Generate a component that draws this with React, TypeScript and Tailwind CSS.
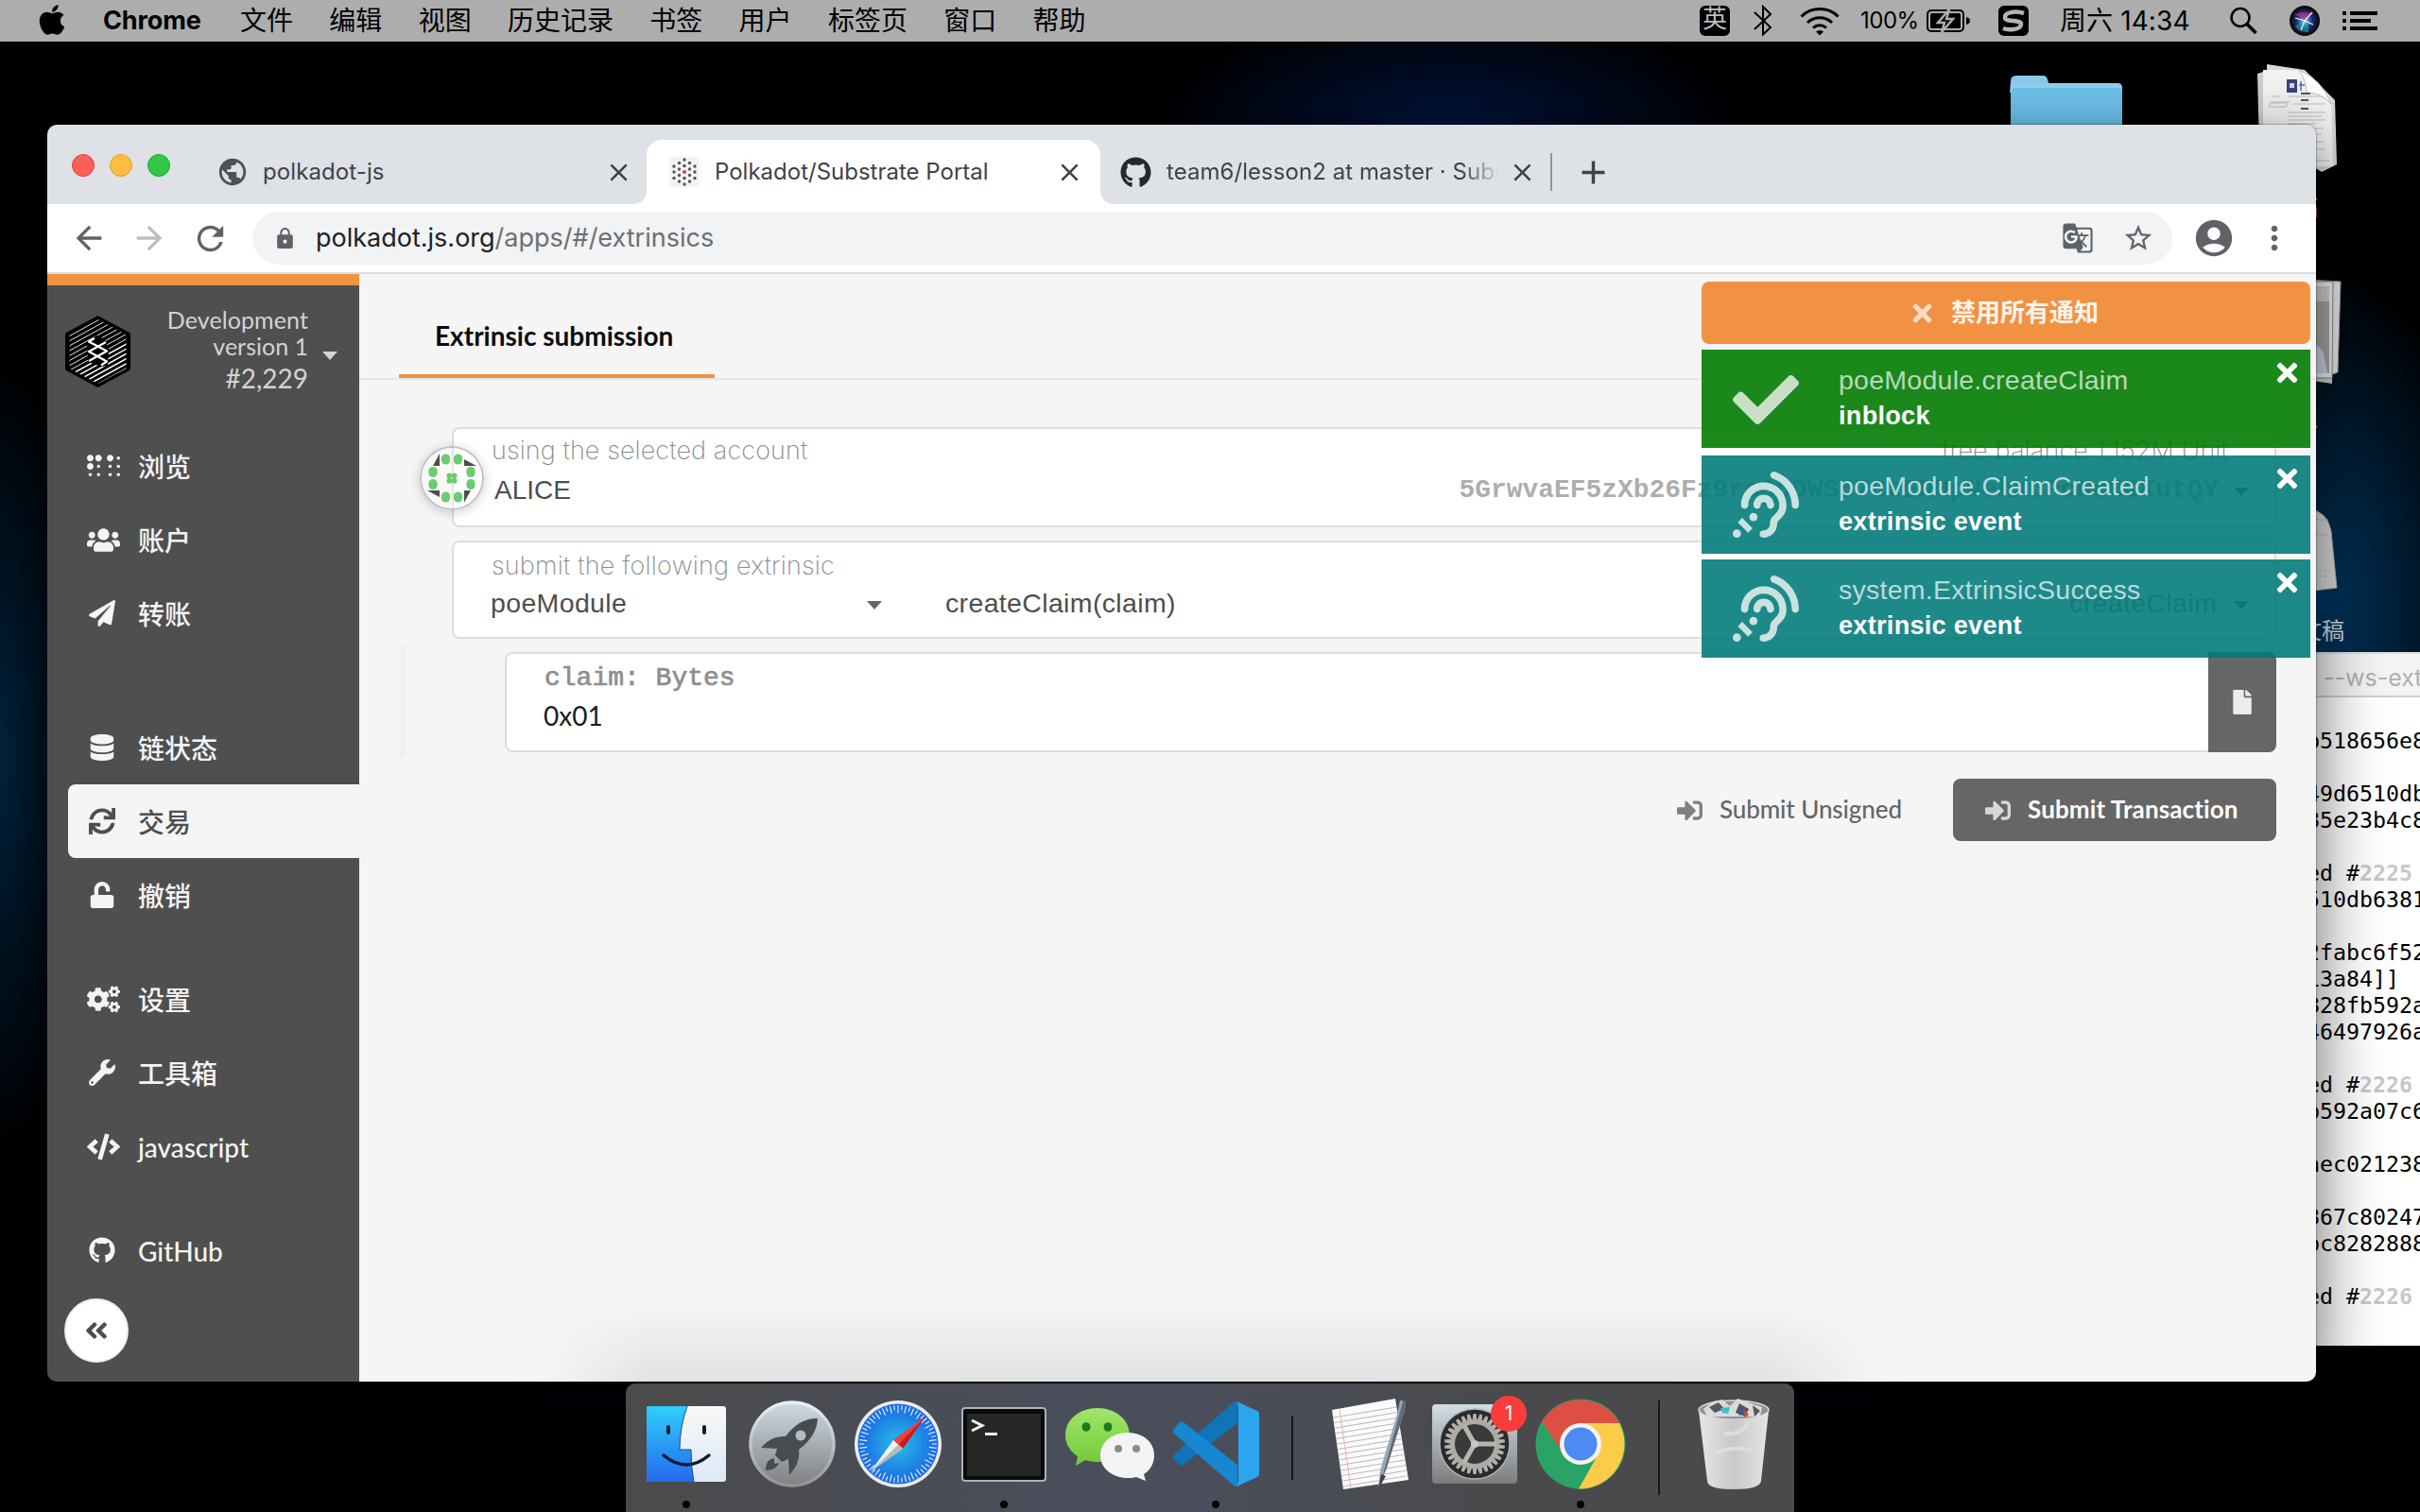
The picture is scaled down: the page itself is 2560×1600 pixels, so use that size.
import React from "react";
import {
  FaApple,
  FaBraille,
  FaUsers,
  FaPaperPlane,
  FaDatabase,
  FaSync,
  FaUnlock,
  FaCogs,
  FaWrench,
  FaCode,
  FaGithub,
  FaAngleDoubleLeft,
  FaTimes,
  FaCheck,
  FaAssistiveListeningSystems,
  FaFile,
  FaSignInAlt,
} from "react-icons/fa";
import {
  MdArrowBack,
  MdArrowForward,
  MdRefresh,
  MdLock,
  MdClose,
  MdAdd,
  MdPublic,
  MdMoreVert,
  MdGTranslate,
  MdStarBorder,
  MdAccountCircle,
} from "react-icons/md";

const SF = "font-['Inter','Noto_Sans_CJK_SC',sans-serif]";
const LATO = "font-['Lato','Noto_Sans_CJK_SC',sans-serif]";
const HELV = "font-['Liberation_Sans',sans-serif]";
const MONO = "font-['Liberation_Mono',monospace]";

/* ---------- menu bar ---------- */

const menus = ["文件", "编辑", "视图", "历史记录", "书签", "用户", "标签页", "窗口", "帮助"];

function MenuBar() {
  return (
    <div className={`flex h-11 w-full items-center bg-[#adadad] text-[28px] text-black ${SF}`}>
      <FaApple className="ml-[37px] size-[36px] shrink-0 -translate-y-px" />
      <span className="ml-9 w-[108px] whitespace-nowrap text-[27px] font-bold leading-[44px] tracking-[-0.1px]">Chrome</span>
      <div className="ml-[37px] flex gap-[38.300px] whitespace-nowrap pt-px leading-[45px]">
        {menus.map((m) => (
          <span key={m}>{m}</span>
        ))}
      </div>
      <div className="ml-auto flex items-center whitespace-nowrap leading-[44px]">
        <div className="flex size-8 items-center justify-center rounded-[6px] bg-black text-[26px] leading-none text-[#bdbdbd]">
          <span className="-mt-1 leading-8">英</span>
        </div>
        <svg className="ml-[25px] h-[34px] w-[20px]" viewBox="0 0 20 34" fill="none" stroke="#000" strokeWidth="2">
          <path d="M1 8 L18 24 L10 31.5 V2 L18 10 L1 26" />
        </svg>
        <svg className="ml-[29px] h-[32px] w-[42px]" viewBox="0 0 42 32" fill="none" stroke="#000" strokeWidth="3">
          <path d="M1.5 11.500 A28 28 0 0 1 40.500 11.500" />
          <path d="M8 18 A19 19 0 0 1 34 18" />
          <path d="M14 23.500 A10.500 10.500 0 0 1 28 23.500" />
          <path d="M17 27.500 Q21 24.500 25 27.500 L21 31.500 Z" fill="#000" stroke="none" />
        </svg>
        <span className="ml-[22px] w-[62px] text-[24px] tracking-[-0.5px]">100%</span>
        <svg className="ml-[8px] h-[26px] w-[46px]" viewBox="0 0 46 26">
          <rect x="1" y="2" width="38" height="22" rx="4" fill="none" stroke="#000" strokeWidth="2" />
          <rect x="4" y="5" width="32" height="16" rx="1.500" />
          <path d="M42 9 q4 1 4 4 t-4 4z" />
          <path d="M24 1 L12 15 H19 L16 25 L28 11 H21 Z" stroke="#adadad" strokeWidth="2.500" />
        </svg>
        <svg className="ml-[30px] size-8" viewBox="0 0 32 32">
          <rect width="32" height="32" rx="6" />
          <path d="M27 8 C18 5 6 7 7 13 C8 18 25 14 24 20 C23 26 10 26 5 24" fill="none" stroke="#b5b5b5" strokeWidth="4.500" />
        </svg>
        <span className="ml-[33px] w-[138px] text-[28px] tracking-[0.1px]">周六 14:34</span>
        <svg className="ml-[41px] size-[30px]" viewBox="0 0 30 30" fill="none" stroke="#000" strokeWidth="2.500">
          <circle cx="12" cy="11.500" r="9.500" />
          <path d="M19 18.500 L28.500 28" strokeWidth="3.500" />
        </svg>
        <svg className="ml-[34px] size-8" viewBox="0 0 32 32">
          <defs>
            <radialGradient id="siri">
              <stop offset="0" stopColor="#b8e4f8" />
              <stop offset=".3" stopColor="#3a80c0" />
              <stop offset=".6" stopColor="#232a78" />
              <stop offset="1" stopColor="#101018" />
            </radialGradient>
          </defs>
          <circle cx="16" cy="16" r="16" fill="#0a0a12" />
          <circle cx="16" cy="16" r="14" fill="url(#siri)" />
          <path d="M5 10 Q14 4 25 9 Q18 12 16 16 Q10 10 5 10" fill="#b0308a" opacity=".7" />
          <path d="M6 22 Q12 16 16 16 Q22 20 20 28 Q10 28 6 22" fill="#28c0b0" opacity=".5" />
          <path d="M16 16 L24 7 M16 16 L6 13 M16 16 L25 20 M16 16 L12 26" stroke="#e8f4ff" strokeWidth="1.200" />
        </svg>
        <svg className="ml-[24px] mr-[45px] h-[20px] w-[37px]" viewBox="0 0 37 20">
          <path d="M0 0h4v4H0zM8 0h29v4H8zM0 8h4v4H0zM8 8h22v4H8zM0 16h4v4H0zM8 16h29v4H8z" />
        </svg>
      </div>
    </div>
  );
}

/* ---------- desktop icons ---------- */

function DesktopIcons() {
  return (
    <>
      <svg className="absolute left-[2126px] top-[78px] h-[70px] w-[120px]" viewBox="0 0 120 70">
        <path d="M1 8 q0-6 6-6 h28 q4 0 5 4 l4 14 H0z" fill="#8ccbea" />
        <path d="M1 70 V10 h40 q3 0 4 0 h69 q5 0 5 5 V70z" fill="#93d0ee" />
        <path d="M1 70 V20 q0-5 5-5 h108 q5 0 5 5 V70z" fill="#6dc3ec" />
      </svg>
      <svg className="absolute left-[2386px] top-[66px] h-[120px] w-[88px]" viewBox="0 0 88 120">
        <path d="M12 2 L52 8 L84 40 L86 108 L70 116 L12 80z" fill="#d9d9d9" />
        <path d="M2 12 L8 10 L14 90 L4 90z" fill="#cfcfcf" />
        <path d="M8 8 L46 8 Q62 12 80 40 L82 110 L8 110z" fill="#f3f3f3" />
        <path d="M46 8 Q54 20 54 32 Q70 32 80 44 Q70 18 46 8" fill="#fff" stroke="#bbb" />
        <rect x="33" y="18" width="11" height="14" fill="#3a4278" />
        <rect x="36" y="22" width="5" height="5" fill="#d0d8f0" />
        <path d="M48 20v10M46 24h6" stroke="#5868b0" strokeWidth="1.500" />
        <path d="M48 33h10M48 40h8M48 49h8" stroke="#555" strokeWidth="2" />
        <path d="M17 36h8M34 36h36M17 42h20M40 44h34M34 53h40M34 57h36M34 61h40M34 65h30M34 70h38M34 76h36M34 84h38M60 92h14" stroke="#bdbdbd" />
        <path d="M15 43h18v4h-18z" fill="none" stroke="#bbb" />
        <path d="M50 104h28" stroke="#9cd0ee" />
      </svg>
      <svg className="absolute left-[2440px] top-[294px] h-[116px] w-[38px]" viewBox="0 0 38 116">
        <path d="M0 2 L36 4 L33 100 L0 112z" fill="#e6e6e6" stroke="#999" />
        <path d="M0 108 L27 112 L28 20 L0 20z" fill="#cfcfcf" />
        <path d="M0 4 H28 L27 106 H0z" fill="#f2f2f2" stroke="#888" />
        <rect x="0" y="9" width="24" height="92" fill="#a9a9a4" />
        <rect x="0" y="9" width="24" height="16" fill="#d2d4d8" />
        <path d="M0 101 V74 Q12 66 18 80 L22 101z" fill="#d4d6ea" />
      </svg>
      <svg className="absolute left-[2440px] top-[538px] h-[90px] w-[34px]" viewBox="0 0 34 90">
        <path d="M0 0 Q22 2 26 24 L32 84 L0 88z" fill="#dcdcdc" stroke="#aaa" />
        <path d="M0 12h24M10 28h14M8 66h16M8 72h16" stroke="#b5b5b5" strokeDasharray="3 2" />
      </svg>
      <div className={`absolute left-[2432px] top-[650px] text-[24px] leading-9 text-[#d8dde3] ${SF}`}>文稿</div>
      <div className={`absolute left-[2428px] top-[202px] text-[24px] leading-9 text-[#d8dde3] ${SF}`}>稿</div>
      <div className={`absolute left-[2428px] top-[426px] text-[24px] leading-9 text-[#d8dde3] ${SF}`}>像</div>
    </>
  );
}

/* ---------- terminal window behind the browser ---------- */

type Line = { t: string; n?: string };
const log: Line[] = [
  { t: "b518656e8" }, { t: "" }, { t: "49d6510db" }, { t: "85e23b4c8" }, { t: "" },
  { t: "ed #", n: "2225" }, { t: "510db6381" }, { t: "" }, { t: "2fabc6f52" }, { t: "13a84]]" },
  { t: "828fb592a" }, { t: "46497926a" }, { t: "" }, { t: "ed #", n: "2226" }, { t: "b592a07c6" },
  { t: "" }, { t: "aec021238" }, { t: "" }, { t: "867c80247" }, { t: "bc8282888" }, { t: "" },
  { t: "ed #", n: "2226" },
];

function TerminalWindow() {
  return (
    <div className="absolute left-[2300px] top-[690px] h-[734px] w-[400px] overflow-hidden bg-white">
      <div className={`h-[48px] border-b-2 border-[#cfcfcf] border-t-2 border-t-[#e0e0e0] bg-[#f4f4f4] pl-[158px] text-[25px] leading-[51px] text-[#b0b0b0] ${SF}`}>
        --ws-external
      </div>
      <div className="mt-[32px] pl-[140px] font-['DejaVu_Sans_Mono',monospace] text-[23.26px] leading-[28px] text-black">
        {log.map((l, i) => (
          <div key={i} className="h-7 whitespace-pre">
            {l.t}
            {l.n && <b className="text-[#c8c8c8]">{l.n}</b>}
          </div>
        ))}
      </div>
    </div>
  );
}

/* ---------- browser chrome ---------- */

const dots: [number, number][] = [
  [16, 3], [10.5, 6.5], [21.5, 6.5], [5, 10], [16, 9.500], [27, 10], [10.5, 13], [21.5, 13],
  [5, 16], [27, 16], [10.5, 19.500], [21.5, 19.500], [5, 22.500], [16, 22.500], [27, 22.500],
  [10.5, 26], [21.5, 26], [16, 29],
];

function TabStrip() {
  return (
    <div className={`flex h-[84px] items-end bg-[#dee1e6] text-[24px] text-[#3f4246] ${SF}`}>
      <div className="flex h-[68px] w-[620px] items-center pl-[26px]">
        <div className="-mt-[14px] flex gap-4">
          <span className="size-6 rounded-full border border-[#e0443e] bg-[#ff5f57]" />
          <span className="size-6 rounded-full border border-[#dea123] bg-[#febc40]" />
          <span className="size-6 rounded-full border border-[#1aab29] bg-[#33c748]" />
        </div>
        <MdPublic className="ml-[49px] size-[34px] text-[#4e5257]" />
        <span className="ml-[15px] tracking-[0.1px]">polkadot-js</span>
        <MdClose className="ml-auto size-[31px] shrink-0" />
      </div>
      <div className="relative ml-[14px] flex h-[68px] w-[480px] items-center rounded-t-[16px] bg-white pl-[24px]">
        <svg className="absolute -left-4 bottom-0 size-4" viewBox="0 0 16 16"><path d="M16 0v16H0Q16 16 16 0" fill="#fff" /></svg>
        <svg className="absolute -right-4 bottom-0 size-4" viewBox="0 0 16 16"><path d="M0 0v16h16Q0 16 0 0" fill="#fff" /></svg>
        <svg className="size-8" viewBox="0 0 32 32">
          <rect width="32" height="32" fill="#f3f3f3" />
          {dots.map(([x, y], i) => (
            <circle key={i} cx={x} cy={y} r="1.700" fill="#555" />
          ))}
          <circle cx="16" cy="16" r="2" fill="#e6298a" />
        </svg>
        <span className="ml-[16px] whitespace-nowrap tracking-[0px]">Polkadot/Substrate Portal</span>
        <MdClose className="ml-auto mr-[17px] size-[31px] shrink-0" />
      </div>
      <div className="flex h-[68px] items-center pl-[21px]">
        <FaGithub className="size-[33px] shrink-0 text-[#24292e]" />
        <span className="ml-4 w-[350px] overflow-hidden whitespace-nowrap tracking-[0.05px] [mask-image:linear-gradient(to_right,black_89%,transparent_101%)]">
          team6/lesson2 at master · Substrate
        </span>
        <MdClose className="ml-[11px] size-[31px] shrink-0" />
        <span className="ml-[14px] h-10 w-[2px] bg-[#8f9398]" />
        <MdAdd className="ml-[23px] size-[41px] shrink-0" />
      </div>
    </div>
  );
}

function Toolbar() {
  return (
    <div className={`flex h-[74px] items-center border-b-2 border-[#d9dbdf] bg-white text-[#5f6368] ${SF}`}>
      <MdArrowBack className="ml-[24px] size-[40px] shrink-0" />
      <MdArrowForward className="ml-[24px] size-[40px] shrink-0 text-[#bcbec1]" />
      <MdRefresh className="ml-[24px] size-[41px] shrink-0" />
      <div className="ml-[24px] flex h-14 w-[2031px] items-center rounded-full bg-[#f1f3f4] pl-[22px]">
        <MdLock className="size-[25px]" />
        <span className="ml-[20px] pt-px text-[27px] tracking-[0px] text-[#6b6f74]">
          <span className="text-[#202124]">polkadot.js.org</span>/apps/#/extrinsics
        </span>
        <MdGTranslate className="ml-auto size-[34px]" />
        <MdStarBorder className="ml-[30px] mr-[19px] size-[34px]" />
      </div>
      <MdAccountCircle className="ml-[21px] size-[46px] shrink-0" />
      <MdMoreVert className="ml-[21px] size-[40px] shrink-0" />
    </div>
  );
}

/* ---------- sidebar ---------- */

const groups = [
  {
    gap: "mt-0",
    items: [
      { icon: FaBraille, label: "浏览", wide: true },
      { icon: FaUsers, label: "账户", wide: true },
      { icon: FaPaperPlane, label: "转账", wide: false },
    ],
  },
  {
    gap: "mt-16",
    items: [
      { icon: FaDatabase, label: "链状态", wide: false },
      { icon: FaSync, label: "交易", wide: false, active: true },
      { icon: FaUnlock, label: "撤销", wide: false },
    ],
  },
  {
    gap: "mt-8",
    items: [
      { icon: FaCogs, label: "设置", wide: true },
      { icon: FaWrench, label: "工具箱", wide: false },
      { icon: FaCode, label: "javascript", wide: true },
    ],
  },
  { gap: "mt-8", items: [{ icon: FaGithub, label: "GitHub", wide: false }] },
] as { gap: string; items: { icon: React.ComponentType<{ className?: string }>; label: string; wide: boolean; active?: boolean }[] }[];

const stripes = Array.from({ length: 15 }, (_, i) => i);

function Logo() {
  return (
    <svg className="h-[76px] w-[69px]" viewBox="0 0 69 76">
      <defs>
        <clipPath id="hex"><path d="M34.500 4 L64.500 20 V56 L34.500 72 L4.500 56 V20z" /></clipPath>
      </defs>
      <path d="M34.500 0 L68 18 Q69 19 69 20 V56 Q69 57 68 58 L34.500 76 L1 58 Q0 57 0 56 V20 Q0 19 1 18z" fill="#000" />
      <g clipPath="url(#hex)" stroke="#fff">
        {stripes.map((i) => (
          <path key={i} d={`M0 ${24 + i * 5.2} L69 ${-14 + i * 5.2}`} strokeWidth={i > 7 ? 1.5 : 0.9} />
        ))}
      </g>
      <path d="M33 21 L42 25 L46 36 L45 53 L38 54 L24 49 L23 28z" fill="#000" />
      <g fill="none" stroke="#fff" strokeWidth="2.200" strokeLinejoin="round">
        <path d="M31 24 L25 27.500 L44 37.500 L25 48" />
        <path d="M43 28 L25 38 L44 48.500 L38 52.500" />
      </g>
    </svg>
  );
}

function Sidebar() {
  return (
    <div className={`flex h-full w-[330px] shrink-0 flex-col border-t-[12px] border-[#f19242] bg-[#4f4f4f] text-[28px] text-[#f4f4f4] ${LATO}`}>
      <div className="flex h-[152px] pl-[19px] pt-[32px] text-[#d3d3d3]">
        <Logo />
        <div className="-mt-[10px] flex w-[188px] flex-col text-right">
          <span className="text-[25px] leading-[28px] tracking-[0.1px]">Development</span>
          <span className="text-[25px] leading-[28px]">version 1</span>
          <span className="mt-[2px] text-[28px] leading-[36px]">#2,229</span>
        </div>
        <svg className="ml-[15px] mt-[38px] h-[9px] w-4" viewBox="0 0 16 9"><path d="M0 0h16L8 9z" fill="#d3d3d3" /></svg>
      </div>
      {groups.map((g, gi) => (
        <div key={gi} className={g.gap}>
          {g.items.map((it) => (
            <div
              key={it.label}
              className={
                it.active
                  ? "ml-[22px] flex h-[78px] items-center rounded-l-[8px] bg-[#f5f5f5] pl-[18px] text-[#4e4e4e]"
                  : "ml-[22px] flex h-[78px] items-center pl-[18px]"
              }
            >
              <span className="flex w-[38px] justify-center">
                <it.icon className={it.wide ? "size-[35px] shrink-0" : "size-[28px] shrink-0 -translate-x-px"} />
              </span>
              <span className="ml-[18px] pt-px font-medium leading-[40px]">{it.label}</span>
            </div>
          ))}
        </div>
      ))}
      <div className="ml-[18px] mt-[12px] flex size-[68px] items-center justify-center rounded-full border-2 border-[#eee] bg-white text-[#4e4e4e]">
        <FaAngleDoubleLeft className="size-[28px]" />
      </div>
    </div>
  );
}

/* ---------- page content ---------- */

function Caret({ className }: { className: string }) {
  return (
    <svg className={className} viewBox="0 0 16 9">
      <path d="M0 0h16L8 9z" fill="#666" />
    </svg>
  );
}

const ring: [number, number][] = [
  [27.5, 14], [40.5, 14], [14, 27.500], [54, 27.500], [14, 40.500], [54, 40.500], [27.5, 54], [40.5, 54],
];

function Identicon() {
  return (
    <svg className="absolute -left-[36px] top-[18px] size-[68px] rounded-full shadow-[0_2px_12px_rgba(0,0,0,.2)]" viewBox="0 0 68 68">
      <circle cx="34" cy="34" r="33" fill="rgba(255,255,255,.3)" stroke="#c0c0c0" strokeWidth="2" />
      {ring.map(([x, y], i) => (
        <rect key={i} x={x - 4.6} y={y - 5.5} width="9.200" height="11" rx="4.500" fill="#6acd6f" />
      ))}
      <g fill="#6acd6f">
        <circle cx="31.300" cy="31.300" r="2.900" />
        <circle cx="36.700" cy="31.300" r="2.900" />
        <circle cx="31.300" cy="36.700" r="2.900" />
        <circle cx="36.700" cy="36.700" r="2.900" />
      </g>
      <path d="M21 8V21H14zM47 14L60 21H47zM8 47H21V54zM47 47H54L47 60z" fill="#4e4e4e" />
    </svg>
  );
}

function Content() {
  return (
    <div className="relative flex-1 bg-[#f5f5f5]">
      <div className={`h-[112px] border-b-2 border-[#e6e6e6] pl-[42px] ${LATO}`}>
        <div className="h-[110px] w-[334px] whitespace-nowrap border-b-4 border-[#f19242] pl-[38px] pt-[44px] text-[28px] font-bold leading-[42px] text-[#0c0c0c]">
          Extrinsic submission
        </div>
      </div>

      <div className="relative ml-[98px] mt-[50px] flex h-[106px] w-[1930px] rounded-[8px] border-2 border-[#ddd] bg-white pl-[40px]">
        <Identicon />
        <div className="flex-1 pt-[7px]">
          <div className={`text-[27px] font-extralight leading-8 tracking-[0.1px] text-[#8a8a8a] ${SF}`}>using the selected account</div>
          <div className={`mt-[10px] pl-[3px] text-[28px] leading-8 text-[#4e4e4e] ${HELV}`}>ALICE</div>
        </div>
        <div className="pt-[7px] text-right">
          <div className={`-mr-[10px] text-[27px] font-extralight leading-8 tracking-[0.15px] text-[#8a8a8a] ${SF}`}>free balance 1.152M Unit</div>
          <div className={`mt-[10px] text-[27.900px] font-bold leading-8 text-[#adadad] ${MONO}`}>
            5GrwvaEF5zXb26Fz9rcQpDWS57CtERHpNehXCPcNoHGKutQY
          </div>
        </div>
        <Caret className="ml-[16px] mr-[27px] mt-[62px] h-[9px] w-4" />
      </div>

      <div className="ml-[98px] mt-[14px] flex h-[104px] w-[1930px] rounded-[8px] border-2 border-[#ddd] bg-white pl-[40px]">
        <div className="w-[397px] shrink-0 pt-[9px]">
          <div className={`whitespace-nowrap text-[27px] font-extralight leading-8 tracking-[0.2px] text-[#8a8a8a] ${SF}`}>submit the following extrinsic</div>
          <div className={`-ml-px mt-[7px] text-[28.500px] leading-8 tracking-[0.35px] text-[#4e4e4e] ${HELV}`}>poeModule</div>
        </div>
        <Caret className="mt-[62px] h-[9px] w-4" />
        <div className={`ml-[67px] flex-1 pt-[48px] text-[28.500px] leading-8 tracking-[0.35px] text-[#4e4e4e] ${HELV}`}>createClaim(claim)</div>
        <div className={`pt-[48px] text-[28.500px] leading-8 tracking-[0.35px] text-[#8a8a8a] ${HELV}`}>createClaim</div>
        <Caret className="ml-[18px] mr-[27px] mt-[62px] h-[9px] w-4" />
      </div>

      <div className="ml-[42px] mt-[6px] flex h-[120px] border-l-8 border-[#f0f0f0] pl-[104px] pt-[8px]">
        <div className="flex h-[106px] w-[1874px]">
          <div className="flex-1 rounded-l-[8px] border-2 border-r-0 border-[#ddd] bg-white pl-[40px] pt-[10px]">
            <div className={`text-[28px] leading-8 text-[#8e8e8e] [-webkit-text-stroke:0.7px_#8e8e8e] ${MONO}`}>claim: Bytes</div>
            <div className={`-ml-px mt-[7px] text-[28px] leading-8 text-[#1c1c1c] ${LATO}`}>0x01</div>
          </div>
          <div className="flex w-[72px] items-center justify-center rounded-r-[8px] bg-[#666]">
            <FaFile className="size-[26px] text-[#ececec]" />
          </div>
        </div>
      </div>

      <div className={`mr-[42px] mt-[22px] flex h-[66px] justify-end text-[26px] ${LATO}`}>
        <div className="mr-[54px] flex items-center text-[#666]">
          <FaSignInAlt className="size-[27px] text-[#808080]" />
          <span className="-mt-[2px] ml-[18px] font-medium tracking-[-0.08px]">Submit Unsigned</span>
        </div>
        <div className="flex w-[342px] items-center rounded-[8px] bg-[#666] pl-[34px] text-white">
          <FaSignInAlt className="size-[27px] text-[#d8d8d8]" />
          <span className="-mt-[2px] ml-[18px] whitespace-nowrap font-bold tracking-[0.12px]">Submit Transaction</span>
        </div>
      </div>

      <Notifications />
      <div className="absolute bottom-0 left-[190px] h-[84px] w-[1420px] bg-[linear-gradient(to_bottom,transparent,rgba(0,0,0,.075))] [mask-image:linear-gradient(to_right,transparent,black_120px,black_1300px,transparent)]" />
    </div>
  );
}

const notices = [
  { title: "poeModule.createClaim", sub: "inblock", cls: "relative flex h-[104px] bg-[rgba(0,122,0,.89)]", ok: true },
  { title: "poeModule.ClaimCreated", sub: "extrinsic event", cls: "relative mt-2 flex h-[104px] bg-[rgba(0,122,122,.885)]", ok: false },
  { title: "system.ExtrinsicSuccess", sub: "extrinsic event", cls: "relative mt-[6px] flex h-[104px] bg-[rgba(0,122,122,.885)]", ok: false },
];

function Notifications() {
  return (
    <div className="absolute right-[6px] top-[8px] w-[644px]">
      <div className={`mb-[6px] flex h-[66px] items-center justify-center rounded-[8px] bg-[#f19242] pr-[5px] text-[26px] font-bold text-[#fdf3ea] ${LATO}`}>
        <FaTimes className="mr-[16px] size-[29px] text-[#f8dcc4]" />
        <span className="-mt-px">禁用所有通知</span>
      </div>
      {notices.map((n) => (
        <div key={n.title} className={n.cls}>
          <div className="ml-[33px] flex w-[70px] items-center justify-center text-[#c9e2df]">
            {n.ok ? <FaCheck className="mt-[2px] size-[70px] text-[#c8e0c8]" /> : <FaAssistiveListeningSystems className="size-[70px]" />}
          </div>
          <div className={`ml-[42px] pt-[16px] leading-8 ${HELV}`}>
            <div className="text-[28.500px] tracking-[0.26px] text-white/70">{n.title}</div>
            <div className="mt-[6px] text-[27px] font-bold tracking-[0.32px] text-white">{n.sub}</div>
          </div>
          <FaTimes className="absolute right-[9px] top-[9px] size-[31px] text-white" />
        </div>
      ))}
    </div>
  );
}

/* ---------- dock ---------- */

const ticks = Array.from({ length: 60 }, (_, i) => i);
const teeth = Array.from({ length: 30 }, (_, i) => i);

function Finder() {
  return (
    <svg className="h-[80px] w-[84px]" viewBox="0 0 84 80">
      <defs>
        <linearGradient id="fl" x2="0" y2="1"><stop stopColor="#2dd0fd" /><stop offset="1" stopColor="#2469ee" /></linearGradient>
        <linearGradient id="fr" x2="0" y2="1"><stop stopColor="#f8f8f8" /><stop offset="1" stopColor="#dce9f6" /></linearGradient>
      </defs>
      <rect width="84" height="80" rx="3" fill="url(#fr)" />
      <path d="M3 0H43Q35 22 35 46H47Q47 64 50 80H3Q0 80 0 77V3Q0 0 3 0" fill="url(#fl)" />
      <path d="M43 0Q35 22 35 46H47Q47 64 50 80" fill="none" stroke="#1c4e8c" strokeWidth="1" />
      <path d="M23 22v6M61 22v6" stroke="#0c1c2c" strokeWidth="4" strokeLinecap="round" />
      <path d="M18 52Q42 72 66 52" fill="none" stroke="#0c1c2c" strokeWidth="3.500" strokeLinecap="round" />
    </svg>
  );
}

function Launchpad() {
  return (
    <svg className="size-[92px]" viewBox="0 0 92 92">
      <defs>
        <linearGradient id="lp" x2="0" y2="1"><stop stopColor="#cddbe2" /><stop offset="1" stopColor="#7f8081" /></linearGradient>
        <linearGradient id="lpr" x2="0" y2="1"><stop stopColor="#e4f1f7" /><stop offset="1" stopColor="#929394" /></linearGradient>
      </defs>
      <circle cx="46" cy="46" r="44" fill="url(#lp)" stroke="url(#lpr)" strokeWidth="3.500" />
      <path d="M73 19 Q54 18 39 38 Q24 37 13 50 L30 51 L28 58 L35 65 L42 62 L43 79 Q55 66 53 52 Q72 38 73 19" fill="#484c50" />
      <path d="M27 61 Q18 62 18 74 Q30 73 32 66 L27 67z" fill="#484c50" />
      <circle cx="55" cy="37" r="5.500" fill="#b3bcc1" />
    </svg>
  );
}

function Safari() {
  return (
    <svg className="size-[92px]" viewBox="0 0 92 92">
      <defs>
        <radialGradient id="sf"><stop stopColor="#27bfe0" /><stop offset="1" stopColor="#1a68e8" /></radialGradient>
      </defs>
      <circle cx="46" cy="46" r="46" fill="#ececec" />
      <circle cx="46" cy="46" r="42.500" fill="url(#sf)" />
      {ticks.map((i) => (
        <path key={i} d={i % 2 ? "M46 5v5" : "M46 5v8"} stroke="#d8ecfa" strokeWidth="1.200" transform={`rotate(${i * 6} 46 46)`} />
      ))}
      <path d="M75 17L41 42L51 51z" fill="#f0403c" />
      <path d="M75 17L46.500 46.500L51 51z" fill="#c81c20" />
      <path d="M17 75L41 42L51 51z" fill="#f2f2f2" />
      <path d="M17 75L46.500 46.500L51 51z" fill="#b8b8b8" />
    </svg>
  );
}

function TerminalIcon() {
  return (
    <svg className="h-[79px] w-[90px]" viewBox="0 0 90 79">
      <rect x="1" y="1" width="88" height="77" rx="3" fill="#0a0a0a" stroke="#a9b4b8" strokeWidth="2" />
      <rect x="6" y="7" width="78" height="66" fill="#262626" />
      <path d="M11 14L22 19.500L11 25M25 28.500H38" fill="none" stroke="#f2f2f2" strokeWidth="3" />
    </svg>
  );
}

function WeChat() {
  return (
    <svg className="h-[78px] w-[95px]" viewBox="0 0 95 78">
      <defs>
        <linearGradient id="wc" x2="0" y2="1"><stop stopColor="#a0e66c" /><stop offset="1" stopColor="#72ca38" /></linearGradient>
      </defs>
      <path d="M34 1C15 1 0 13 0 30c0 9 5 17 13 22l-2 10 10-6c4 1 8 2 13 2 19 0 34-11 34-28S53 1 34 1" fill="url(#wc)" />
      <ellipse cx="22" cy="21" rx="4.500" ry="4.800" fill="#1b7a1c" />
      <ellipse cx="45" cy="21" rx="4.500" ry="4.800" fill="#1b7a1c" />
      <path d="M66 27C50 27 37 37 37 51s13 24 29 24c3 0 6 0 9-1l10 4-2-7c7-4 11-12 11-20 0-14-12-24-28-24" fill="#f4f4f4" />
      <circle cx="56" cy="44" r="4" fill="#8a8c8a" />
      <circle cx="75" cy="44" r="4" fill="#8a8c8a" />
    </svg>
  );
}

function VSCode() {
  return (
    <svg className="size-[92px]" viewBox="0 0 92 92">
      <path d="M2 62L8 68Q10 69 12 68L69 24V1Q67 1 65 2L2 57Q0 60 2 62" fill="#1173b8" />
      <path d="M2 30L8 23Q10 22 12 23L69 68V91Q67 91 65 90L2 35Q0 32 2 30" fill="#1787d2" />
      <path d="M68 1L90 11Q92 12 92 14V78Q92 80 90 81L68 91Q70 88 70 84V8Q70 4 68 1" fill="#2ca5ef" />
    </svg>
  );
}

function TextEdit() {
  return (
    <svg className="h-[97px] w-[84px]" viewBox="0 0 84 97">
      <path d="M1 12L68 0L82 86L13 96z" fill="#fbfbfb" />
      {ticks.slice(0, 14).map((i) => (
        <path key={i} d={`M${2.5 + i * 0.8} ${20 + i * 5.6}L${69 + i * 0.9} ${9 + i * 5.6}`} stroke="#b8b8b8" strokeWidth="1" />
      ))}
      <path d="M9 11L21 95" stroke="#f0b0ac" strokeWidth="1" />
      <path d="M73 2L79 3L78 12L58 76L50 94L52 76L70 16z" fill="#97a9b8" />
      <path d="M76 3L79 3L78 12L58 76L54 84z" fill="#5d6c7a" />
      <path d="M50 96L53 80L58 82z" fill="#4a4040" />
    </svg>
  );
}

function Prefs() {
  return (
    <div className="relative">
      <svg className="h-[84px] w-[90px]" viewBox="0 0 90 84">
        <defs>
          <linearGradient id="pf" x2="0" y2="1"><stop stopColor="#d2dfe5" /><stop offset="1" stopColor="#7c7c7c" /></linearGradient>
        </defs>
        <rect width="90" height="84" rx="4" fill="url(#pf)" />
        <circle cx="45" cy="42" r="37" fill="#2b2b2b" stroke="#aab4ba" strokeWidth="1.500" />
        {teeth.map((i) => (
          <path key={i} d="M43.500 10h3l1 7h-5z" fill="#b4b1ad" transform={`rotate(${i * 12} 45 42)`} />
        ))}
        <circle cx="45" cy="42" r="23.500" fill="#3a3a3a" stroke="#aeaba7" strokeWidth="5" />
        <path d="M45 42H68M45 42L33.500 22M45 42L33.500 62" stroke="#b8b5b1" strokeWidth="5" />
        <circle cx="45" cy="42" r="4" fill="#c8c8c8" />
      </svg>
      <span className={`absolute -right-[10px] -top-[9px] flex size-[38px] items-center justify-center rounded-full bg-[#f93d3c] text-[21px] text-white ${SF}`}>1</span>
    </div>
  );
}

function ChromeIcon() {
  return (
    <svg className="size-[96px]" viewBox="0 0 96 96">
      <circle cx="48" cy="48" r="47.500" fill="#2aa466" />
      <path d="M7 24A47.500 47.500 0 0 1 89 26H48L28 56z" fill="#dd4f42" />
      <path d="M89 26A47.500 47.500 0 0 1 46 95.500L66 60L48 26z" fill="#fdcb4a" />
      <circle cx="48" cy="48" r="22" fill="#f4f4f4" />
      <circle cx="48" cy="48" r="17.500" fill="#4b8bf2" />
    </svg>
  );
}

function Trash() {
  return (
    <svg className="h-[98px] w-[76px]" viewBox="0 0 76 98">
      <defs>
        <linearGradient id="tr" x2="1" y2="0"><stop stopColor="#e6e6e6" /><stop offset=".5" stopColor="#c9c9ca" /><stop offset="1" stopColor="#e4e4e4" /></linearGradient>
      </defs>
      <ellipse cx="38" cy="13" rx="37" ry="10" fill="#8f9296" stroke="#d8d8d8" strokeWidth="1.500" />
      <path d="M6 12L16 4L26 2L34 9L42 1L56 6L68 10L66 20L10 20z" fill="#dadada" />
      <path d="M12 10L22 5L28 12L18 16zM44 6L54 12L50 20L40 16zM58 8L66 14L60 20z" fill="#55585c" />
      <path d="M24 11L34 10L32 17L26 16z" fill="#38c0c8" />
      <path d="M42 10L50 16L44 19z" fill="#3a5a98" />
      <path d="M48 12L54 18L50 21z" fill="#c05030" />
      <path d="M1 14Q10 23 38 23T75 14L67 88Q66 97 38 97T10 88z" fill="url(#tr)" />
      <path d="M28 38Q46 40 54 26M18 60Q34 50 58 56" stroke="#dededf" strokeWidth="4" fill="none" />
    </svg>
  );
}

const apps = [
  { C: Finder, box: "w-[84px] ml-[22px]", dot: true },
  { C: Launchpad, box: "w-[92px] ml-[24px]", dot: false },
  { C: Safari, box: "w-[92px] ml-[20px]", dot: false },
  { C: TerminalIcon, box: "w-[90px] ml-[21px]", dot: true },
  { C: WeChat, box: "w-[95px] ml-[20px]", dot: false },
  { C: VSCode, box: "w-[92px] ml-[18px]", dot: true },
];
const apps2 = [
  { C: TextEdit, box: "w-[84px] ml-[40px]", dot: false },
  { C: Prefs, box: "w-[90px] ml-[23px]", dot: false },
  { C: ChromeIcon, box: "w-[96px] ml-[19px]", dot: true },
];

function DockItem({ C, box, dot }: { C: () => React.ReactElement; box: string; dot: boolean }) {
  return (
    <div className={`flex shrink-0 flex-col items-center ${box}`}>
      <div className="flex h-[128px] items-center">
        <C />
      </div>
      {dot && <span className="-mt-1 size-2 rounded-full bg-black" />}
    </div>
  );
}

function Dock() {
  return (
    <div className="absolute bottom-0 left-[662px] flex h-[136px] w-[1236px] rounded-t-[10px] bg-[linear-gradient(to_right,#4b4b4c,#4a4e5a_35%,#4a4e5a_50%,#4a4a4c_75%)]">
      {apps.map((a, i) => (
        <DockItem key={i} {...a} />
      ))}
      <span className="ml-[34px] mt-[34px] h-[68px] w-[2px] shrink-0 bg-[#17171a]" />
      {apps2.map((a, i) => (
        <DockItem key={i} {...a} />
      ))}
      <span className="ml-[34px] mt-[18px] h-[100px] w-[2px] shrink-0 bg-[#17171a]" />
      <DockItem C={Trash} box="w-[76px] ml-[40px]" dot={false} />
    </div>
  );
}

export default function App() {
  return (
    <div className="relative h-[1600px] w-[2560px] overflow-hidden bg-black bg-[radial-gradient(ellipse_320px_120px_at_1530px_130px,#00143c,transparent),radial-gradient(ellipse_110px_430px_at_0px_800px,#002440,transparent),radial-gradient(ellipse_200px_380px_at_2440px_650px,#003a68,transparent),radial-gradient(ellipse_900px_60px_at_1280px_1465px,#020a20,transparent)]">
      <MenuBar />
      <DesktopIcons />
      <TerminalWindow />
      <div className="absolute left-[50px] top-[132px] h-[1330px] w-[2400px] rounded-[10px] shadow-[0_20px_70px_rgba(0,0,0,.6),0_0_2px_rgba(0,0,0,.8)]">
        <div className="flex h-full w-full flex-col overflow-hidden rounded-[10px]">
          <TabStrip />
          <Toolbar />
          <div className="flex min-h-0 flex-1">
            <Sidebar />
            <Content />
          </div>
        </div>
      </div>
      <Dock />
    </div>
  );
}
